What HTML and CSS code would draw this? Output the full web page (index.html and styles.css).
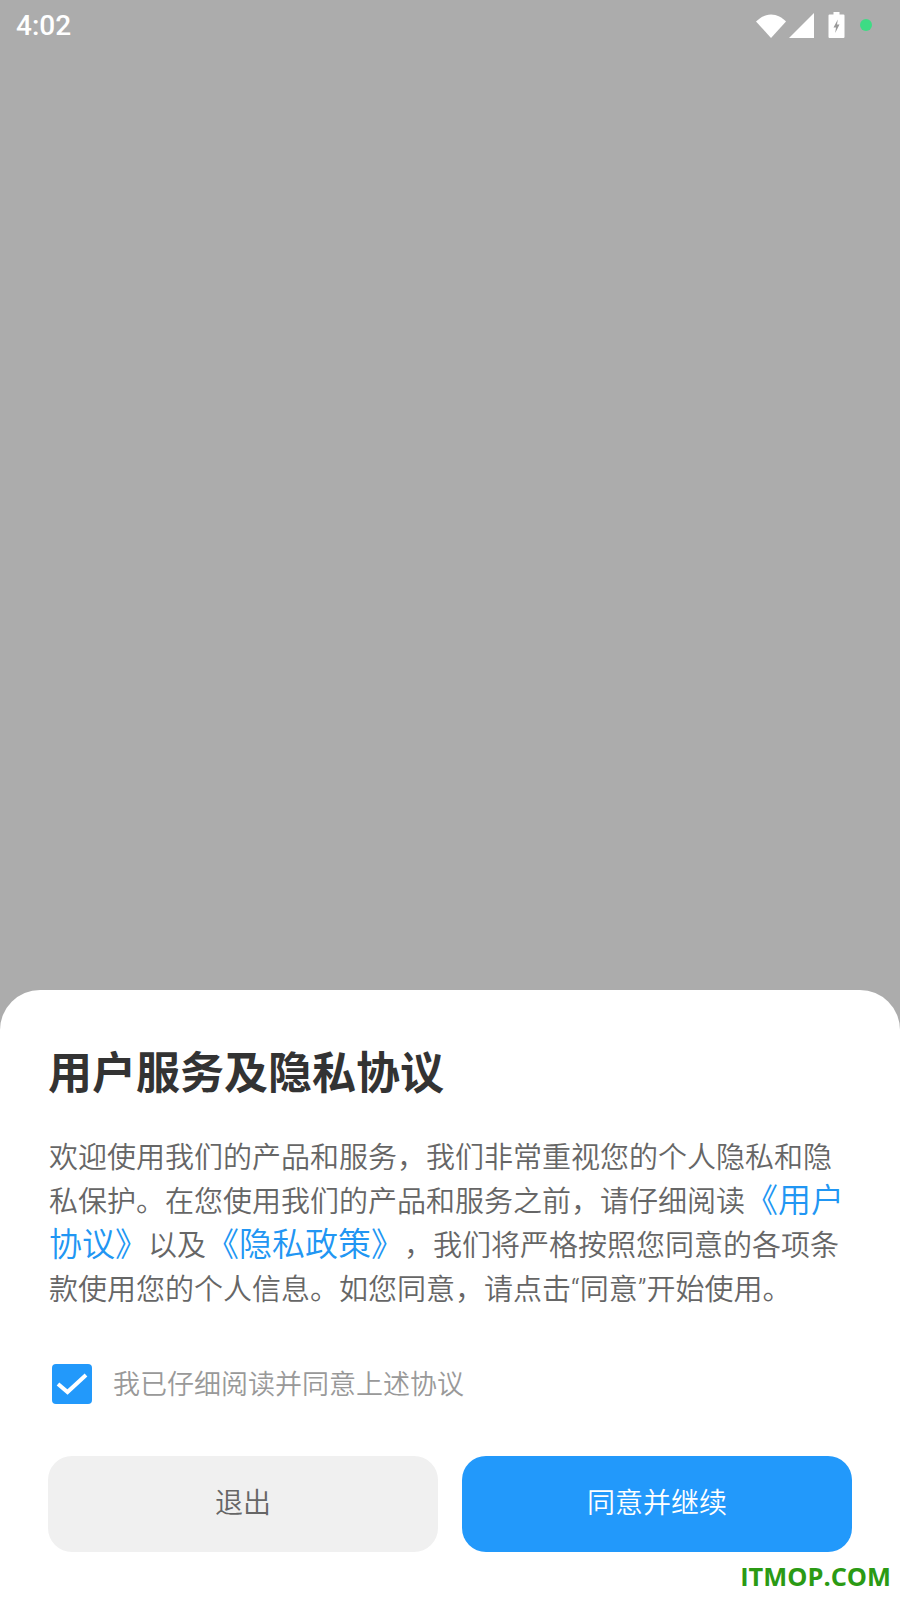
FILE: index.html
```html
<!DOCTYPE html>
<html lang="zh-CN">
<head>
<meta charset="utf-8">
<title>用户服务及隐私协议</title>
<link rel="stylesheet" href="styles.css">
</head>
<body>
<div class="screen">
  <div class="backdrop">
    <div class="statusbar">
      <span class="time">4:02</span>
      <div class="status-icons">
        <svg class="ic-wifi" width="30" height="25" viewBox="0 0 30 25"><path d="M0 8.500C4 4.600 9 1.500 15 1.500S26 4.600 30 8.500L15 25Z" fill="#fff"/></svg>
        <svg class="ic-signal" width="25" height="25" viewBox="0 0 25 25"><path d="M25 0V25H0Z" fill="#fff"/></svg>
        <svg class="ic-battery" width="17" height="26" viewBox="0 0 17 26"><path d="M5.500 0H11.500V2.500H15.500A1 1 0 0 1 16.500 3.500V25A1 1 0 0 1 15.500 26H1.500A1 1 0 0 1 .5 25V3.500A1 1 0 0 1 1.500 2.500H5.500Z" fill="#fff"/><path d="M9.800 7.500L5.500 15.500H8L7.200 21L11.500 12.500H9Z" fill="#9a9a9a"/></svg>
        <span class="dot"></span>
      </div>
    </div>
  </div>
  <div class="sheet">
    <h1 class="title">用户服务及隐私协议</h1>
    <p class="body">欢迎使用我们的产品和服务，我们非常重视您的个人隐私和隐私保护。在您使用我们的产品和服务之前，请仔细阅读<a class="link">《用户协议》</a>以及<a class="link">《隐私政策》</a>，我们将严格按照您同意的各项条款使用您的个人信息。如您同意，请点击“同意”开始使用。</p>
    <div class="agree">
      <span class="checkbox">
        <svg width="40" height="40" viewBox="0 0 40 40"><path d="M6 20L15.500 28L34 11" fill="none" stroke="#fff" stroke-width="4"/></svg>
      </span>
      <span class="agree-text">我已仔细阅读并同意上述协议</span>
    </div>
    <div class="actions">
      <button class="btn btn-exit">退出</button>
      <button class="btn btn-ok">同意并继续</button>
    </div>
    <div class="watermark">ITMOP.COM</div>
  </div>
</div>
</body>
</html>
```
FILE: styles.css
```css
* { box-sizing: border-box; }
html, body { margin: 0; padding: 0; }
body {
  width: 900px;
  height: 1600px;
  overflow: hidden;
  font-family: Roboto, "Noto Sans CJK SC", sans-serif;
  text-spacing-trim: space-all;
}
.screen {
  width: 900px;
  height: 1600px;
  display: flex;
  flex-direction: column;
  background: #acacac;
}
.backdrop { flex: 1; }
.statusbar {
  height: 50px;
  display: flex;
  align-items: center;
  justify-content: space-between;
  padding: 0 28px 0 16px;
}
.time {
  font-family: Roboto, sans-serif;
  font-size: 28px;
  font-weight: 500;
  color: #fff;
}
.status-icons {
  display: flex;
  align-items: center;
  height: 50px;
}
.ic-wifi { margin-right: 3px; }
.ic-signal { margin-right: 14px; }
.ic-battery { margin-right: 15px; }
.dot {
  width: 12px;
  height: 12px;
  border-radius: 50%;
  background: #3ddc84;
}
.sheet {
  height: 610px;
  background: #fff;
  border-radius: 40px 40px 0 0;
  padding: 52px 48px 0;
  display: flex;
  flex-direction: column;
}
.title {
  margin: 0;
  font-size: 44px;
  line-height: 64px;
  font-weight: 700;
  color: #333;
}
.body {
  margin: 30px 0 0 1px;
  font-size: 29px;
  line-height: 44px;
  font-weight: 350;
  color: #666;
}
.link {
  color: #2196f3;
  font-size: 33px;
  line-height: 1;
}
.agree {
  display: flex;
  align-items: center;
  margin: 48px 0 0 4px;
  height: 48px;
}
.checkbox {
  width: 40px;
  height: 40px;
  border-radius: 4px;
  background: #2299fb;
  display: block;
}
.checkbox svg { display: block; }
.agree-text {
  margin: -3px 0 0 21px;
  font-size: 27px;
  font-weight: 350;
  color: #999;
}
.actions {
  display: flex;
  gap: 24px;
  margin-top: 48px;
}
.btn {
  flex: 1;
  height: 96px;
  padding: 0 0 6px;
  border: 0;
  border-radius: 24px;
  font-family: inherit;
  font-size: 28px;
  font-weight: 350;
}
.btn-exit { background: #f0f0f0; color: #666; }
.btn-ok { background: #2299fb; color: #fff; }
.watermark {
  position: absolute;
  right: 9px;
  bottom: 8px;
  font-family: "Open Sans", sans-serif;
  font-size: 25.4px;
  line-height: 32px;
  font-weight: 700;
  color: #2b9a14;
}
```
